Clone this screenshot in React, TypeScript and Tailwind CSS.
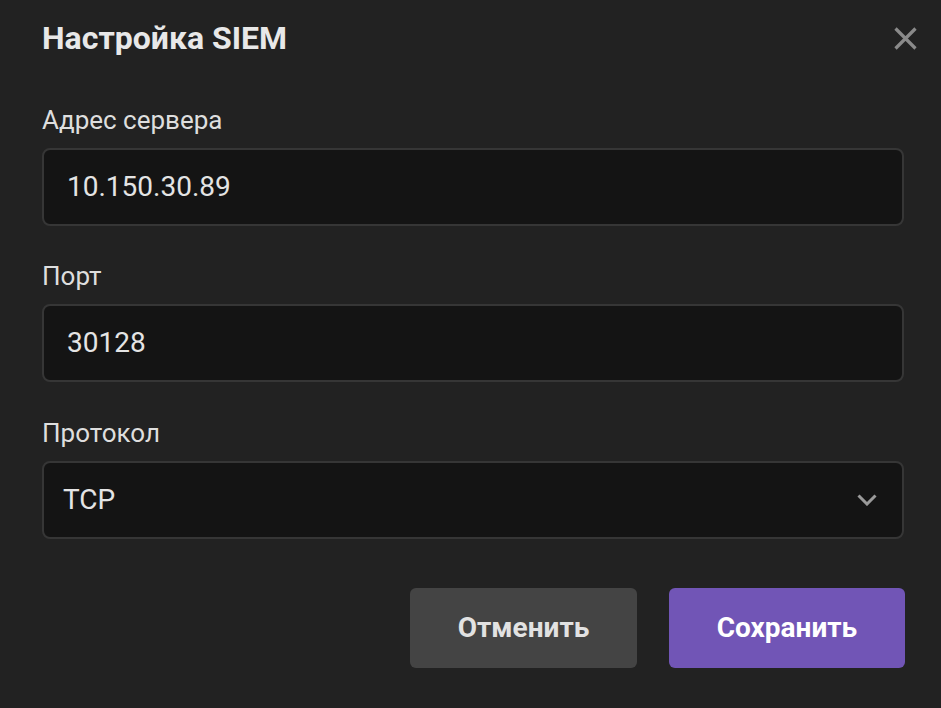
import React from "react";

export default function App() {
  return (
    <div
      className="w-[941px] h-[708px] bg-[#222222] pl-[42px] pr-[37px] pt-[17px] overflow-hidden"
      style={{ fontFamily: "Roboto, 'Noto Sans', sans-serif" }}
    >
      <div className="flex h-[42px] items-center justify-between">
        <h1 className="text-[32px] font-bold leading-[42px] text-[#e8e8e8]">Настройка SIEM</h1>
        <button className="mr-[-16px] flex h-[30px] w-[30px] items-center justify-center text-[#8a8a8a]">
          <svg width="23" height="23" viewBox="0 0 23 23" fill="none" stroke="currentColor" strokeWidth="3.2" strokeLinecap="butt">
            <path d="M1.5 1.5 L21.5 21.5 M21.5 1.5 L1.5 21.5" />
          </svg>
        </button>
      </div>

      <div className="mt-[46px] flex flex-col">
        <label className="mb-[13px] block h-[30px] text-[26px] leading-[30px] text-[#dedede]">Адрес сервера</label>
        <div className="flex h-[78px] items-center rounded-[8px] border-2 border-[#363636] bg-[#141414] pl-[23px] text-[28px] text-[#e4e4e4]">
          10.150.30.89
        </div>

        <label className="mb-[13px] mt-[35px] block h-[30px] text-[26px] leading-[30px] text-[#dedede]">Порт</label>
        <div className="flex h-[78px] items-center rounded-[8px] border-2 border-[#363636] bg-[#141414] pl-[23px] text-[28px] text-[#e4e4e4]">
          30128
        </div>

        <label className="mb-[13px] mt-[36px] block h-[30px] text-[26px] leading-[30px] text-[#dedede]">Протокол</label>
        <div className="flex h-[78px] items-center justify-between rounded-[8px] border-2 border-[#363636] bg-[#141414] pl-[19px] pr-[25px] text-[28px] text-[#e4e4e4]">
          <span>TCP</span>
          <svg width="20" height="12" viewBox="0 0 20 12" fill="none" stroke="#9a9a9a" strokeWidth="3">
            <path d="M1.5 1.5 L10 10 L18.5 1.5" />
          </svg>
        </div>
      </div>

      <div className="mt-[49px] flex justify-end gap-[32px]">
        <button className="h-[80px] w-[227px] rounded-[6px] bg-[#444444] text-[28px] font-bold text-[#e2e2e2]">Отменить</button>
        <button className="mr-[-1px] h-[80px] w-[236px] rounded-[6px] bg-[#7155b6] text-[28px] font-bold text-white">Сохранить</button>
      </div>
    </div>
  );
}
